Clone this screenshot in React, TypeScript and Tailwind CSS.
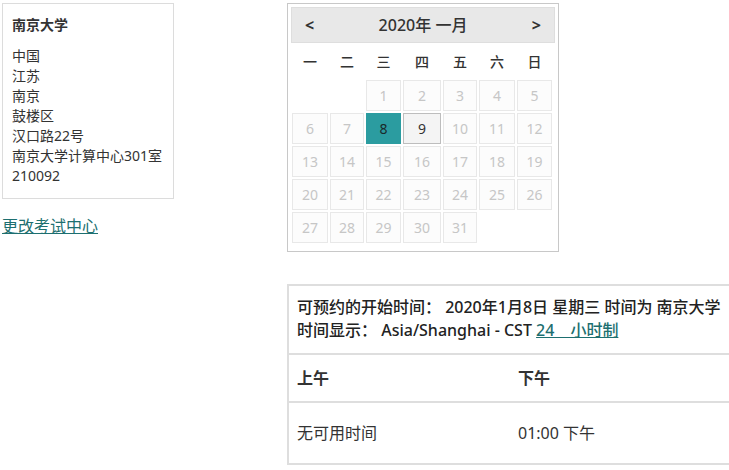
import React from 'react';

const weekdays = ["一", "二", "三", "四", "五", "六", "日"];

// Jan 2020 starts on a Wednesday (3rd column)
const cells: (number | null)[] = [
    null, null,
    ...Array.from({ length: 31 }, (_, i) => i + 1),
];

export default function App() {
    return (
        <div
            className="w-[729px] h-[470px] overflow-hidden bg-white text-[#333] flex"
            style={{ fontFamily: '"Noto Sans", "Noto Sans CJK SC", sans-serif' }}
        >
            {/* address column */}
            <div className="ml-[2px] mt-[3px] w-[172px] shrink-0">
                <div className="border border-[#dcdcdc] h-[196px] px-[9px] pt-[11px] text-[14px] leading-[20px]">
                    <div className="font-bold">南京大学</div>
                    <div className="mt-[11px]">
                        <div>中国</div>
                        <div>江苏</div>
                        <div>南京</div>
                        <div>鼓楼区</div>
                        <div>汉口路22号</div>
                        <div>南京大学计算中心301室</div>
                        <div>210092</div>
                    </div>
                </div>
                <a href="#" className="block mt-[16px] text-[16px] leading-[22px] text-[#1d6f70] underline">
                    更改考试中心
                </a>
            </div>

            {/* calendar + time slots */}
            <div className="ml-[113px] mt-[3px] shrink-0">
                <div className="w-[272px] h-[249px] border border-[#c8c8c8] p-[3px]">
                    <div className="h-[36px] bg-[#e8e8e8] border border-[#dedede] flex items-center justify-between px-[13px]">
                        <span className="font-bold text-[16px]">&lt;</span>
                        <span className="text-[16px] font-medium">2020年 一月</span>
                        <span className="font-bold text-[16px]">&gt;</span>
                    </div>
                    <div className="px-[1px]">
                        <div className="grid grid-cols-[36px_34px_35px_38px_34px_36px_35px] gap-x-[2px] h-[37px] items-center text-[14px] font-medium">
                            {weekdays.map((d) => (
                                <div key={d} className="text-center">{d}</div>
                            ))}
                        </div>
                        <div className="grid grid-cols-[36px_34px_35px_38px_34px_36px_35px] auto-rows-[31px] gap-[2px] text-[14px]">
                            {cells.map((n, i) =>
                                n === null ? (
                                    <div key={i} />
                                ) : n === 8 ? (
                                    <div key={i} className="flex items-center justify-center bg-[#2b9ca0] text-[#1a2a2a] border border-[#2b9ca0]">
                                        {n}
                                    </div>
                                ) : n === 9 ? (
                                    <div key={i} className="flex items-center justify-center bg-[#f4f4f4] text-[#333] border border-[#bdbdbd]">
                                        {n}
                                    </div>
                                ) : (
                                    <div key={i} className="flex items-center justify-center bg-[#fcfcfc] text-[#c6c6c6] border border-[#e8e8e8]">
                                        {n}
                                    </div>
                                )
                            )}
                        </div>
                    </div>
                </div>

                <div className="mt-[32px] w-[460px] border-2 border-[#dedede] text-[16px]">
                    <div className="px-[8px] pt-[10px] pb-[11px] leading-[23px] border-b-2 border-[#dedede] text-[#222]">
                        <div className="font-medium">可预约的开始时间： 2020年1月8日 星期三 时间为 南京大学</div>
                        <div className="font-medium">
                            时间显示： Asia/Shanghai - CST{" "}
                            <a href="#" className="text-[#1d6f70] underline">24　小时制</a>
                        </div>
                    </div>
                    <div className="grid grid-cols-[221px_1fr] px-[8px] h-[48px] items-center font-bold border-b-2 border-[#dedede]">
                        <div>上午</div>
                        <div>下午</div>
                    </div>
                    <div className="grid grid-cols-[221px_1fr] px-[8px] h-[60px] items-center">
                        <div>无可用时间</div>
                        <div>01:00 下午</div>
                    </div>
                </div>
            </div>
        </div>
    );
}
